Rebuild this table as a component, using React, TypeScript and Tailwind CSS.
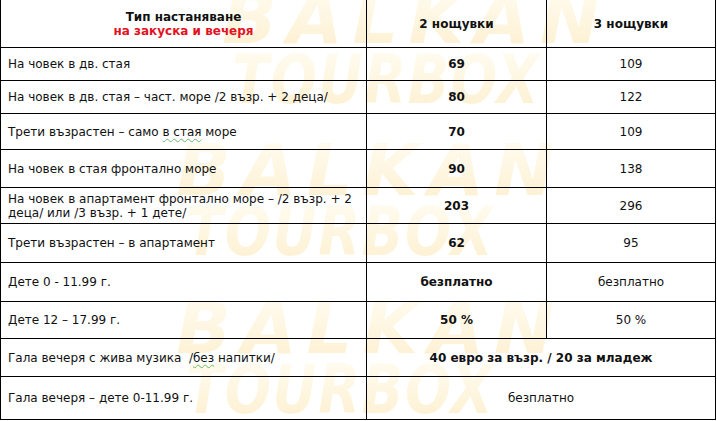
type Row = {
  label: React.ReactNode;
  two?: string;
  three?: string;
  merged?: string;
  mergedBold?: boolean;
  h: string;
};

const squiggle = "underline decoration-wavy decoration-[#6cb86c] decoration-1 underline-offset-2";

const rows: Row[] = [
  { label: "На човек в дв. стая", two: "69", three: "109", h: "h-[33px]" },
  { label: "На човек в дв. стая – част. море /2 възр. + 2 деца/", two: "80", three: "122", h: "h-[33px]" },
  {
    label: (
      <>
        Трети възрастен – само <span className={squiggle}>в стая</span> море
      </>
    ),
    two: "70",
    three: "109",
    h: "h-[36px]",
  },
  { label: "На човек в стая фронтално море", two: "90", three: "138", h: "h-[38px]" },
  {
    label: (
      <>
        На човек в апартамент фронтално море – /2 възр. + 2
        <br />
        деца/ или /3 възр. + 1 дете/
      </>
    ),
    two: "203",
    three: "296",
    h: "h-[36px]",
  },
  { label: "Трети възрастен – в апартамент", two: "62", three: "95", h: "h-[39px]" },
  { label: "Дете 0 - 11.99 г.", two: "безплатно", three: "безплатно", h: "h-[39px]" },
  { label: "Дете 12 – 17.99 г.", two: "50 %", three: "50 %", h: "h-[37px]" },
  {
    label: (
      <>
        Гала вечеря с жива музика&nbsp; /<span className={squiggle}>без</span> напитки/
      </>
    ),
    merged: "40 евро за възр. / 20 за младеж",
    mergedBold: true,
    h: "h-[38px]",
  },
  { label: "Гала вечеря – дете 0-11.99 г.", merged: "безплатно", h: "h-[43px]" },
];

// faint site watermark sitting behind the table
function Logo({ className }: { className: string }) {
  return (
    <div aria-hidden className={`absolute select-none italic font-black leading-none ${className}`}>
      <div className="bg-gradient-to-b from-[#fffcf2] to-[#fdf0d0] bg-clip-text text-[72px] tracking-[10px] text-transparent">
        BALKAN
      </div>
      <div className="-mt-[8px] ml-[10px] origin-left scale-x-[0.8] bg-gradient-to-b from-[#fffcf2] to-[#fdf0d0] bg-clip-text text-[68px] tracking-[2px] text-transparent">
        TOURBOX
      </div>
    </div>
  );
}

export default function App() {
  return (
    <div className="relative h-[421px] w-[717px] overflow-hidden bg-white font-['DejaVu_Sans',Verdana,sans-serif] text-[12px] leading-[14px] text-[#111]">
      <div className="absolute inset-0">
        <Logo className="left-[222px] top-[-18px]" />
        <Logo className="left-[176px] top-[134px]" />
        <Logo className="left-[176px] top-[292px]" />
      </div>

      <div className="relative w-[716px]">
        <div className="grid h-[48px] grid-cols-[366px_180px_169px] border-b border-r border-black">
          <div className="flex flex-col items-center justify-center border-l border-black font-bold">
            <span>Тип настаняване</span>
            <span className="text-[#e3121f]">на закуска и вечеря</span>
          </div>
          <div className="flex items-center justify-center border-l border-black font-bold">2 нощувки</div>
          <div className="flex items-center justify-center border-l border-black font-bold">3 нощувки</div>
        </div>

        {rows.map((r, i) => (
          <div
            key={i}
            className={`grid ${r.h} grid-cols-[366px_180px_169px] border-b border-r border-black`}
          >
            <div className="flex items-center border-l border-black pl-[7px]">
              <span>{r.label}</span>
            </div>
            {r.merged ? (
              <div
                className={`col-span-2 flex items-center justify-center border-l border-black ${
                  r.mergedBold ? "font-bold" : ""
                }`}
              >
                {r.merged}
              </div>
            ) : (
              <>
                <div className="flex items-center justify-center border-l border-black font-bold">{r.two}</div>
                <div className="flex items-center justify-center border-l border-black">{r.three}</div>
              </>
            )}
          </div>
        ))}
      </div>
    </div>
  );
}
